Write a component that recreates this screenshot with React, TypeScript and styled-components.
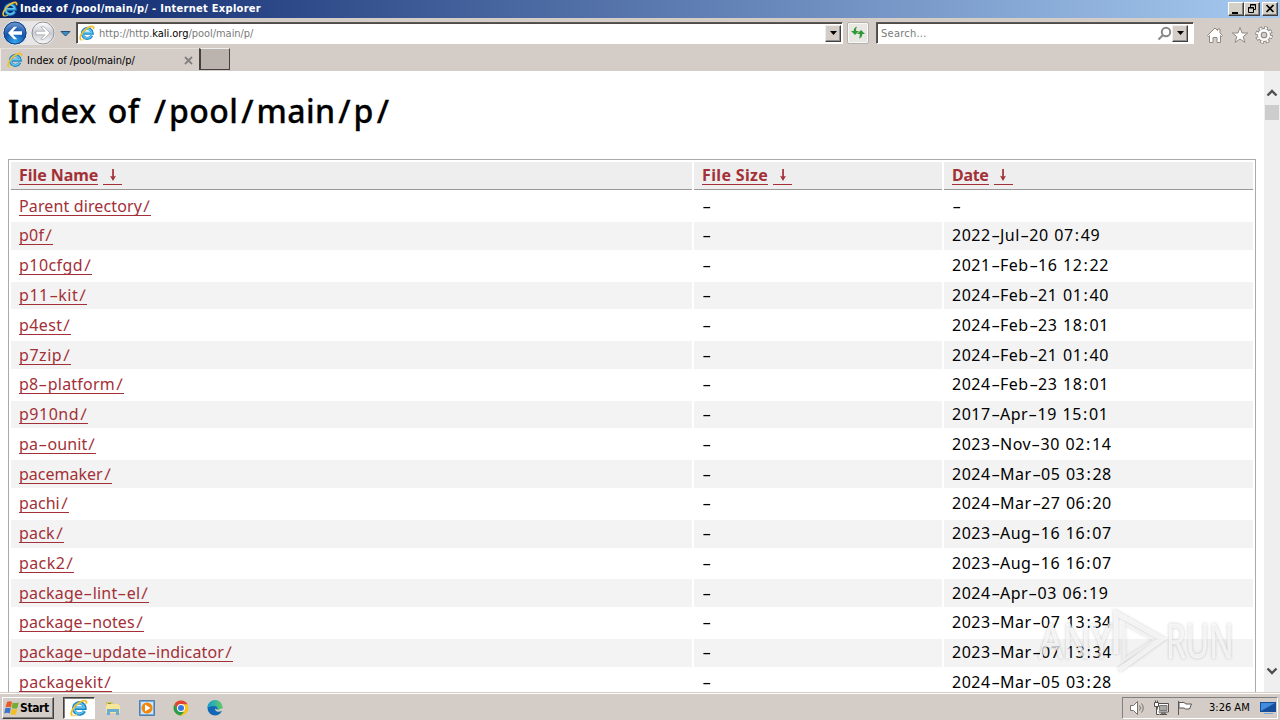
import React from "react";
import styled, { createGlobalStyle } from "styled-components";

type Entry = { name: string; date: string; space?: number };

const entries: Entry[] = [
  { name: "Parent directory/", date: "-", space: 0.13 },
  { name: "p0f/", date: "2022-Jul-20 07:49", space: 0.2 },
  { name: "p10cfgd/", date: "2021-Feb-16 12:22", space: 0.45 },
  { name: "p11-kit/", date: "2024-Feb-21 01:40", space: 0.55 },
  { name: "p4est/", date: "2024-Feb-23 18:01", space: 0.4 },
  { name: "p7zip/", date: "2024-Feb-21 01:40", space: 0.55 },
  { name: "p8-platform/", date: "2024-Feb-23 18:01", space: 0.2 },
  { name: "p910nd/", date: "2017-Apr-19 15:01", space: 0.5 },
  { name: "pa-ounit/", date: "2023-Nov-30 02:14", space: 0.1 },
  { name: "pacemaker/", date: "2024-Mar-05 03:28", space: 0 },
  { name: "pachi/", date: "2024-Mar-27 06:20", space: 0.05 },
  { name: "pack/", date: "2023-Aug-16 16:07" },
  { name: "pack2/", date: "2023-Aug-16 16:07", space: 0.4 },
  { name: "package-lint-el/", date: "2024-Apr-03 06:19" },
  { name: "package-notes/", date: "2023-Mar-07 13:34", space: 0.12 },
  { name: "package-update-indicator/", date: "2023-Mar-07 13:34", space: 0.15 },
  { name: "packagekit/", date: "2024-Mar-05 03:28", space: 0.3 },
];

const columns = [
  { label: "File Name", space: -0.05 },
  { label: "File Size", space: 0.35 },
  { label: "Date", space: -0.3 },
];

const GlobalStyle = createGlobalStyle`
  * { box-sizing: border-box; }
  body {
    margin: 0;
    overflow: hidden;
    background: #fff;
    font-family: "DejaVu Sans Condensed", "DejaVu Sans", sans-serif;
    font-size: 11px;
    color: #000;
  }
`;

const Screen = styled.div`
  position: relative;
  width: 1280px;
  height: 720px;
  display: flex;
  flex-direction: column;
  overflow: hidden;
`;

const TitleBar = styled.header`
  flex: 0 0 18px;
  display: flex;
  align-items: center;
  padding: 0 2px 0 2px;
  background: linear-gradient(90deg, #0a246a, #a6caf0);
`;

const Title = styled.span`
  flex: 1;
  margin-left: 2px;
  color: #fff;
  font-weight: bold;
  font-size: 11px;
  letter-spacing: 0.29px;
  line-height: 16px;
  white-space: nowrap;
`;

const WinButton = styled.span<{ gap?: number }>`
  width: 16px;
  height: 14px;
  margin-left: ${(p) => p.gap || 0}px;
  background: #d4d0c8;
  border: 1px solid;
  border-color: #fff #404040 #404040 #fff;
  box-shadow: inset -1px -1px 0 #808080;
  svg {
    display: block;
  }
`;

const Toolbar = styled.div`
  flex: 0 0 28px;
  display: flex;
  align-items: center;
  padding: 2px 7px 0 2px;
  background: #d4cdc7;
`;

const NavButtons = styled.div`
  width: 74px;
  height: 26px;
  svg {
    display: block;
  }
`;

const Field = styled.div<{ width: number; inset?: number; trail?: number }>`
  width: ${(p) => p.width}px;
  height: 22px;
  display: flex;
  align-items: center;
  padding: 0 ${(p) => p.trail || 0}px 0 ${(p) => p.inset || 0}px;
  background: #fff;
  border: 1px solid #808080;
  border-color: #5b5755 #fff #fff #5b5755;
  box-shadow: inset 1px 1px 0 #504c4a;
`;

const Address = styled.span<{ space?: number }>`
  flex: 1;
  padding-left: 4px;
  color: #7a7a7a;
  letter-spacing: ${(p) => p.space ?? -0.04}px;
  white-space: nowrap;
  b {
    color: #000;
    font-weight: normal;
  }
`;

const DropButton = styled.span`
  width: 16px;
  height: 17px;
  margin-right: 1px;
  display: flex;
  align-items: center;
  justify-content: center;
  background: #d4cdc7;
  border: 1px solid;
  border-color: #eee #404040 #404040 #eee;
  box-shadow: inset -1px -1px 0 #909090;
`;

const RefreshButton = styled.span`
  width: 22px;
  height: 22px;
  margin: 0 7px 0 4px;
  display: flex;
  align-items: center;
  justify-content: center;
  background: #e9e7e3;
  border: 1px solid #b5b0aa;
  border-radius: 2px;
  box-shadow: inset 0 0 0 1px #f8f8f6;
`;

const Tools = styled.div`
  flex: 1;
  display: flex;
  justify-content: flex-end;
  gap: 6.5px;
  padding-top: 3px;
`;

const TabStrip = styled.div`
  flex: 0 0 25px;
  display: flex;
  padding-top: 2px;
  background: #d4cdc7;
`;

const Tab = styled.div`
  width: 199px;
  height: 23px;
  display: flex;
  align-items: center;
  padding: 0 6px 0 6px;
  border-left: 1px solid #eeebe8;
  border-top: 1px solid #e3dfdb;
  span {
    flex: 1;
    margin-left: 4px;
    letter-spacing: -0.03px;
  }
`;

const NewTab = styled.div`
  width: 31px;
  height: 22px;
  background: #bab3ae;
  border: solid #45403e;
  border-width: 0 1px 1px 2px;
  border-top: 1px solid #eee;
`;

const Viewport = styled.div`
  flex: 1;
  min-height: 0;
  display: flex;
  background: #fff;
`;

const Page = styled.main`
  flex: 1;
  padding: 0 8px;
  overflow: hidden;
  font-family: "Noto Sans", "Open Sans", sans-serif;
`;

const Heading = styled.h1`
  height: 88px;
  margin: 0;
  padding-top: 19px;
  font-size: 32px;
  font-weight: 500;
  line-height: 42px;
  letter-spacing: 0.45px;
  word-spacing: 2.5px;
  -webkit-text-stroke: 0.3px #000;
  white-space: nowrap;
`;

const Listing = styled.div`
  display: flex;
  flex-direction: column;
  gap: 2px;
  height: 700px;
  padding: 2px;
  border: 1px solid #aaa;
`;

const Row = styled.div<{ shaded?: boolean; head?: boolean }>`
  flex: none;
  display: grid;
  grid-template-columns: 681px 248px 309px;
  gap: 2px;
  height: ${(p) => (p.head ? 28 : 27.77)}px;
  margin-bottom: ${(p) => (p.head ? 0.35 : 0)}px;
  > div {
    display: flex;
    align-items: center;
    padding: 0 8px;
    font-size: 16px;
    background: ${(p) => (p.head ? "#eee" : p.shaded ? "#f3f3f3" : "#fff")};
    border-bottom: ${(p) => (p.head ? "1px solid #999" : "none")};
  }
`;

const Link = styled.span<{ bold?: boolean; space?: number }>`
  height: 19px;
  line-height: 18px;
  color: #a33037;
  font-size: 16px;
  font-weight: ${(p) => (p.bold ? "bold" : "normal")};
  letter-spacing: ${(p) => p.space ?? 0.2}px;
  border-bottom: 1px solid #a33037;
  white-space: pre;
`;

const SortLink = styled(Link)`
  margin-left: 5px;
  width: 19px;
  display: flex;
  justify-content: center;
  align-items: center;
`;

const DateText = styled.span`
  height: 19px;
  line-height: 18px;
  letter-spacing: 0.5px;
  word-spacing: 1px;
  white-space: pre;
`;

const Dash = styled.span`
  display: inline-block;
  width: 9.4px;
  text-align: center;
  letter-spacing: 0;
  transform: scaleX(1.75);
`;

const Slash = styled.span<{ large?: boolean }>`
  display: inline-block;
  width: ${(p) => (p.large ? 18 : 9)}px;
  text-align: center;
  letter-spacing: 0;
  transform: skewX(${(p) => (p.large ? 0 : -3)}deg);
`;

const Colon = styled.span`
  padding: 0 1.2px;
`;

const ScrollBar = styled.div`
  width: 16px;
  display: flex;
  flex-direction: column;
  align-items: center;
  padding: 17px 0 16px;
  background: #efefef;
`;

const Thumb = styled.div`
  width: 14px;
  height: 15px;
  margin: 7px 0 auto;
  background: #cdcdcd;
`;

const Taskbar = styled.footer`
  flex: 0 0 28px;
  display: flex;
  align-items: center;
  padding: 2px 2px 0 2px;
  background: #d4cdc7;
  border-top: 1px solid #d4cdc7;
  box-shadow: inset 0 1px 0 #fff;
`;

const StartButton = styled.div`
  width: 52px;
  height: 22px;
  display: flex;
  align-items: center;
  padding-left: 1px;
  border: 1px solid;
  border-color: #fff #404040 #404040 #fff;
  box-shadow: inset -1px -1px 0 #808080;
  font-size: 12px;
  font-weight: bold;
  letter-spacing: -0.4px;
`;

const Launch = styled.div<{ active?: boolean }>`
  width: 32px;
  height: 22px;
  margin-left: ${(p) => (p.active ? 9 : 2)}px;
  display: flex;
  align-items: center;
  justify-content: center;
  background: ${(p) => (p.active ? "#fff" : "transparent")};
  border: 1px solid;
  border-color: ${(p) => (p.active ? "#404040 #fff #fff #404040" : "transparent")};
  box-shadow: ${(p) => (p.active ? "inset 1px 1px 0 #808080" : "none")};
`;

const Tray = styled.div`
  width: 156px;
  height: 22px;
  margin-left: auto;
  display: flex;
  align-items: center;
  padding: 0 1px 0 6px;
  border: 1px solid;
  border-color: #808080 #fff #fff #808080;
  svg {
    margin-right: 8px;
  }
  svg:last-child {
    margin: 0;
  }
`;

const Clock = styled.span`
  flex: 1;
  padding-left: 8px;
  letter-spacing: 0;
  white-space: nowrap;
`;

const Watermark = styled.div`
  position: absolute;
  left: 1036px;
  top: 604px;
  width: 210px;
  height: 74px;
  svg {
    display: block;
    filter: drop-shadow(0 0 1.5px rgba(0, 0, 0, 0.28));
  }
`;

const WatermarkText = styled.text`
  font: 400 48px "Open Sans", sans-serif;
  fill: #fff;
  fill-opacity: 0.7;
  stroke: #fff;
  stroke-opacity: 0.5;
  stroke-width: 1px;
`;

const IELogo = ({ size = 16 }: { size?: number }) => (
  <svg width={size} height={size} viewBox="0 0 16 16" fill="none">
    <path
      d="M12.8 10.6a5 5 0 1 1 .5-2.4H4"
      stroke="#1c86c8"
      strokeWidth="3"
    />
    <path
      d="M12.4 10.4a4.6 4.6 0 1 1 .4-2.6H4.5"
      stroke="#62c6f0"
      strokeWidth="1.4"
    />
    <path
      d="M2.2 14.9C-.6 13.3 2.8 6.6 8 3.3c4.2-2.7 7.5-2.6 6.4.9"
      stroke="#efc02e"
      strokeWidth="1.7"
    />
    <path d="M2.2 14.9c1.2.4 2.7-.2 4-1.1" stroke="#f5d65c" strokeWidth="1" />
  </svg>
);

const DownArrow = () => (
  <svg width="7" height="4" viewBox="0 0 7 4">
    <path d="M0 0h7L3.5 4z" fill="#000" />
  </svg>
);

const SortArrow = () => (
  <svg width="8" height="12" viewBox="0 0 8 12" fill="#a33037">
    <path d="M3.2 0h1.7v7.5L7 6.8 4 12 1 6.8l2.2.7z" />
  </svg>
);

const Chevron = ({ up }: { up?: boolean }) => (
  <svg width="12" height="10" viewBox="0 0 12 10" fill="none">
    <path
      d={up ? "M1.5 7.5L6 3l4.5 4.5" : "M1.5 2.5L6 7l4.5-4.5"}
      stroke="#505050"
      strokeWidth="2.4"
    />
  </svg>
);

function Glyphs({ text, large }: { text: string; large?: boolean }) {
  return (
    <>
      {text.split(/([-/:])/).map((part, i) => {
        if (part === "-") return <Dash key={i}>-</Dash>;
        if (part === "/") return <Slash key={i} large={large}>/</Slash>;
        if (part === ":") return <Colon key={i}>:</Colon>;
        return part;
      })}
    </>
  );
}

function Navigation() {
  return (
    <NavButtons>
      <svg width="74" height="26" viewBox="0 0 74 26">
        <defs>
          <radialGradient id="back" cx="50%" cy="90%" r="85%">
            <stop offset="0" stopColor="#35a8f0" />
            <stop offset=".55" stopColor="#1455ad" />
            <stop offset="1" stopColor="#7199cf" />
          </radialGradient>
          <linearGradient id="forward" x1="0" y1="0" x2="0" y2="1">
            <stop offset="0" stopColor="#fff" />
            <stop offset=".5" stopColor="#c8cbd1" />
            <stop offset="1" stopColor="#fafafa" />
          </linearGradient>
        </defs>
        <path d="M13 1h29v24H13z" fill="#e8e6e4" />
        <circle cx="13" cy="13" r="12" fill="url(#back)" stroke="#e9edf3" />
        <circle cx="13" cy="13" r="11" fill="none" stroke="#173f7c" />
        <path d="M6 13l6-6.2h3.2L11 11.2h9v3.6h-9l4.2 4.4H12z" fill="#fff" />
        <circle cx="41" cy="13" r="12" fill="#f0f0ef" />
        <circle cx="41" cy="13" r="11" fill="url(#forward)" stroke="#8f9096" />
        <path
          d="M48 13l-6-6.2h-3.2l4.2 4.4h-9v3.6h9l-4.2 4.4H42z"
          fill="#fff"
          stroke="#a9aab0"
          strokeWidth=".8"
        />
        <path d="M59 11.5h9L63.5 16z" fill="#3e8dc4" stroke="#244f7c" />
      </svg>
    </NavButtons>
  );
}

function BrowserChrome() {
  return (
    <>
      <TitleBar>
        <IELogo />
        <Title>Index of /pool/main/p/ - Internet Explorer</Title>
        <WinButton>
          <svg width="14" height="12">
            <path d="M3 9h6v2H3z" />
          </svg>
        </WinButton>
        <WinButton>
          <svg width="14" height="12" fill="none" stroke="#000">
            <path d="M5.5 4V1.5h5v5H9M5 2h6" />
            <path d="M3.5 4.5h5v5h-5zM3 5h6" />
          </svg>
        </WinButton>
        <WinButton gap={2}>
          <svg width="14" height="12" stroke="#000" strokeWidth="1.7">
            <path d="M3.5 2l7 7M10.5 2l-7 7" />
          </svg>
        </WinButton>
      </TitleBar>
      <Toolbar>
        <Navigation />
        <Field width={767} inset={2}>
          <IELogo />
          <Address>
            http://http.<b>kali.org</b>/pool/main/p/
          </Address>
          <DropButton>
            <DownArrow />
          </DropButton>
        </Field>
        <RefreshButton>
          <svg width="16" height="16" viewBox="0 0 16 16" fill="#2f9a35">
            <path d="M5 10L1 6h2.7Q3.6 2.5 7 1.5 5.8 3.5 6.2 6H9z" />
            <path d="M11 5l4 4h-2.7q.1 3.5-3.3 4.5 1.2-2 .8-4.5H7z" />
          </svg>
        </RefreshButton>
        <Field width={318} trail={4}>
          <Address space={0.25}>Search...</Address>
          <svg width="15" height="15" fill="none" stroke="#888" strokeWidth="2">
            <circle cx="9" cy="6" r="4.2" />
            <path d="M6 9l-4.5 4.5" />
          </svg>
          <DropButton>
            <DownArrow />
          </DropButton>
        </Field>
        <Tools>
          <svg width="18" height="18" fill="#fff" stroke="#8e8984">
            <path d="M1.5 9.5L9 2l2.5 2.5V3H14v4l2.5 2.5-1 1-1-1v7H11v-5H7v5H3.5v-7l-1 1z" />
          </svg>
          <svg width="18" height="18" fill="#fff" stroke="#8e8984">
            <path d="M9 1.5L11 7h5.7l-4.500 3.600 1.700 5.800L9 13l-4.900 3.400 1.700-5.800L1.300 7H7z" />
          </svg>
          <svg width="18" height="18" fill="none">
            <circle cx="9" cy="9" r="7" stroke="#8e8984" strokeWidth="3.6" strokeDasharray="3.6 1.9" />
            <circle cx="9" cy="9" r="4.6" stroke="#8e8984" strokeWidth="4.6" />
            <circle cx="9" cy="9" r="7" stroke="#fff" strokeWidth="2" strokeDasharray="2 3.5" strokeDashoffset="-.8" />
            <circle cx="9" cy="9" r="4.7" stroke="#fff" strokeWidth="2.7" />
          </svg>
        </Tools>
      </Toolbar>
      <TabStrip>
        <Tab>
          <IELogo />
          <span>Index of /pool/main/p/</span>
          <svg width="9" height="9" stroke="#858080" strokeWidth="1.8">
            <path d="M1 1l7 7M8 1L1 8" />
          </svg>
        </Tab>
        <NewTab />
      </TabStrip>
    </>
  );
}

function DirectoryListing() {
  return (
    <Listing>
      <Row head>
        {columns.map((column) => (
          <div key={column.label}>
            <Link bold space={column.space}>
              {column.label}
            </Link>
            <SortLink>
              <SortArrow />
            </SortLink>
          </div>
        ))}
      </Row>
      {entries.map((entry, i) => (
        <Row key={entry.name} shaded={i % 2 === 1}>
          <div>
            <Link space={entry.space}>
              <Glyphs text={entry.name} />
            </Link>
          </div>
          <div>
            <DateText>
              <Glyphs text="-" />
            </DateText>
          </div>
          <div>
            <DateText>
              <Glyphs text={entry.date} />
            </DateText>
          </div>
        </Row>
      ))}
    </Listing>
  );
}

function DesktopTaskbar() {
  return (
    <Taskbar>
      <StartButton>
        <svg width="16" height="16" viewBox="0 0 16 16">
          <path d="M3 2q3-1.500 5 0L7 7.500Q4.500 6 1.500 7.500z" fill="#e85b25" />
          <path d="M8.700 2.500q3 1.300 6-.3L13.500 8q-3 1.300-5.700 0z" fill="#72ae35" />
          <path d="M1.300 8.300q3-1.300 5.500 0L5.700 13.500q-2.500-1.500-5.500 0z" fill="#3976cf" />
          <path d="M7.600 8.800q2.700 1.300 5.700 0L12 14.200q-2.700 1.300-5.500-.3z" fill="#f4bd23" />
        </svg>
        Start
      </StartButton>
      <Launch active>
        <IELogo size={18} />
      </Launch>
      <Launch>
        <svg width="16" height="16" viewBox="0 0 16 16">
          <path d="M1 2h6l1 2h6v9H1z" fill="#e3bd57" />
          <path d="M2 4h11l2 2v7H1V6z" fill="#f8e79b" />
          <path d="M2 9h12v6h-3v-3H5v3H2z" fill="#69add0" />
          <path d="M3 3h3v1H3z" fill="#55a55b" />
        </svg>
      </Launch>
      <Launch>
        <svg width="16" height="16" viewBox="0 0 16 16">
          <path d="M.5.5h15v15H.5z" fill="#78aad7" stroke="#4c7eb0" />
          <path d="M2 2h12v12H2z" fill="#d3e6f6" />
          <circle cx="8" cy="8" r="5.5" fill="#ef8610" />
          <path d="M6 4.5L11.5 8 6 11.5z" fill="#fff" />
        </svg>
      </Launch>
      <Launch>
        <svg width="16" height="16" viewBox="0 0 16 16">
          <circle cx="8" cy="8" r="7.5" fill="#f8c41d" />
          <path d="M1.5 4.3A7.5 7.5 0 0 1 14.5 4.3H8L4.8 9.8z" fill="#e14334" />
          <path d="M1.5 4.3L4.8 9.8 8 11.7h3.2L7.6 15.5A7.5 7.5 0 0 1 1.5 4.3z" fill="#299b4c" />
          <circle cx="8" cy="8" r="4" fill="#fff" />
          <circle cx="8" cy="8" r="3" fill="#3978df" />
        </svg>
      </Launch>
      <Launch>
        <svg width="16" height="16" viewBox="0 0 16 16">
          <defs>
            <linearGradient id="edge" x1="0" x2="1">
              <stop stopColor="#149ed8" />
              <stop offset="1" stopColor="#61cc61" />
            </linearGradient>
          </defs>
          <circle cx="8" cy="8" r="7.5" fill="#1268b4" />
          <path d="M.5 8A7.5 7.5 0 0 1 15.5 7c0 3-3 4-5.500 3 1.500-2 0-4-3-4S1 7 .5 8z" fill="url(#edge)" />
          <path d="M8 8.500c-.3 3 3 4 6.500 2.500l1.500 1v-4l-5 2z" fill="#d4cdc7" />
        </svg>
      </Launch>
      <Tray>
        <svg width="16" height="16" fill="#fff" stroke="#77716d">
          <path d="M1.5 5.5h3l4-4v13l-4-4h-3z" />
          <path d="M10.5 5.5q2 2.500 0 5M12.500 3.500q3.500 4.500 0 9" fill="none" />
        </svg>
        <svg width="16" height="16" fill="none" stroke="#55504d">
          <path d="M4.5 3.5h11V12h-11zM7 14.5h7" fill="#fff" />
          <path d="M6.5 5.5H14v5H6.500z" fill="#aaa6a1" stroke="#777" />
          <path d="M8 12h5v2H8z" fill="#777" stroke="none" />
          <path d="M1.5 2.5h4v4h-4zM2.5.5v2M4.5.5v2M3.5 6.5v8h3" fill="#fff" />
        </svg>
        <svg width="16" height="16" fill="#fff" stroke="#5f5955">
          <path d="M1.5 1v14M2 2.500h5L9 4h5.500l-2 5h-4L7 8H2z" />
        </svg>
        <Clock>3:26 AM</Clock>
        <svg width="16" height="16" viewBox="0 0 16 16">
          <path d="M0 2h16v10H0z" fill="#174d9b" />
          <path d="M1 3h14L1 11z" fill="#438bdc" />
          <path d="M4 13h9v1H4z" fill="#78a9d7" />
        </svg>
      </Tray>
    </Taskbar>
  );
}

export default function App() {
  return (
    <Screen>
      <GlobalStyle />
      <BrowserChrome />
      <Viewport>
        <Page>
          <Heading>
            <Glyphs text="Index of /pool/main/p/" large />
          </Heading>
          <DirectoryListing />
        </Page>
        <ScrollBar>
          <Chevron up />
          <Thumb />
          <Chevron />
        </ScrollBar>
      </Viewport>
      <DesktopTaskbar />
      <Watermark>
        <svg width="210" height="74">
          <g transform="translate(3 54) scale(.78 1)">
            <WatermarkText>ANY</WatermarkText>
          </g>
          <g fill="none" stroke="#fff" strokeOpacity=".75" strokeWidth="5">
            <path d="M80 50V9l46 26-43 31" />
            <path d="M88 18v38l31-20-29-16" strokeWidth="3" strokeOpacity=".55" />
          </g>
          <g transform="translate(130 54) scale(.67 1)">
            <WatermarkText>RUN</WatermarkText>
          </g>
        </svg>
      </Watermark>
    </Screen>
  );
}
